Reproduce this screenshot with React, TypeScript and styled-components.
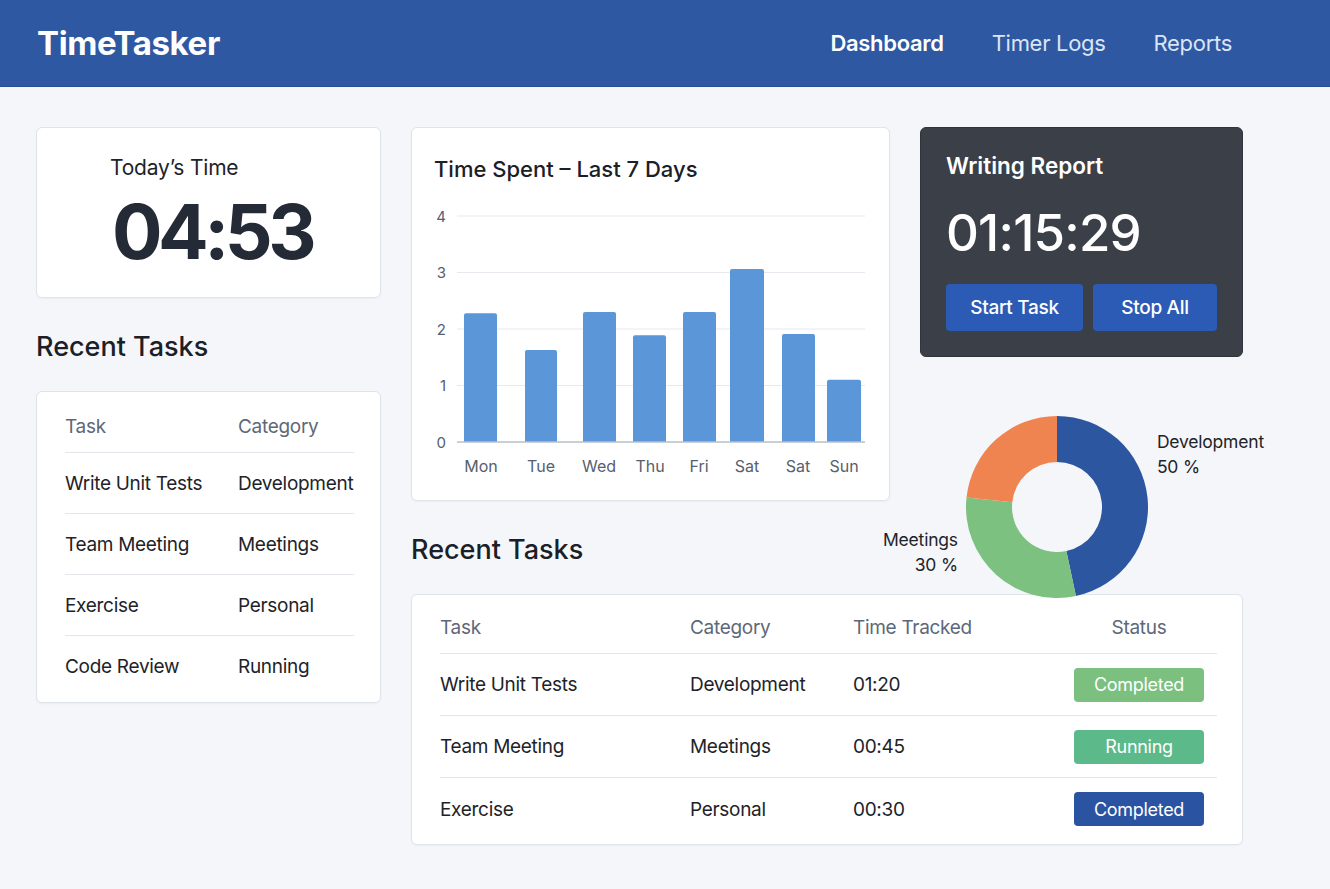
import styled, { createGlobalStyle } from 'styled-components';

const GlobalStyle = createGlobalStyle`
    html, body {
        margin: 0;
        padding: 0;
        background: #f4f6fa;
        font-family: Inter, "Noto Sans", sans-serif;
        color: #1e2329;
    }
    * { box-sizing: border-box; }
`;

const Header = styled.header`
    height: 87px;
    background: #2e58a1;
    border-bottom: 1px solid #284f92;
    display: flex;
    align-items: center;
    justify-content: space-between;
    padding: 0 98px 0 37px;
`;

const Logo = styled.div`
    color: #fff;
    font-size: 33px;
    font-weight: 700;
    letter-spacing: -0.4px;
`;

const Nav = styled.nav`
    display: flex;
    gap: 48px;
`;

const NavLink = styled.a<{ $active?: boolean }>`
    color: ${(p) => (p.$active ? '#ffffff' : '#dbe5f5')};
    font-size: 22px;
    font-weight: ${(p) => (p.$active ? 600 : 400)};
    letter-spacing: -0.3px;
    text-decoration: none;
    cursor: pointer;
`;

const Main = styled.main`
    display: flex;
    gap: 30px;
    padding: 40px 36px;
`;

const Card = styled.div`
    background: #fff;
    border: 1px solid #dfe3ea;
    border-radius: 6px;
    box-shadow: 0 1px 2px rgba(20, 30, 50, 0.04);
`;

const LeftCol = styled.div`
    width: 345px;
    display: flex;
    flex-direction: column;
`;

const TodayCard = styled(Card)`
    height: 171px;
    padding: 27px 0 0 73px;
`;

const TodayLabel = styled.div`
    font-size: 21px;
    line-height: 26px;
    color: #1e2329;
    letter-spacing: -0.2px;
`;

const TodayValue = styled.div`
    margin-top: 13px;
    margin-left: 2px;
    font-size: 75px;
    line-height: 76px;
    font-weight: 700;
    color: #252b36;
    letter-spacing: -4.5px;
`;

const SectionTitle = styled.h2<{ $top?: number; $bottom?: number }>`
    margin: ${(p) => p.$top ?? 0}px 0 ${(p) => p.$bottom ?? 0}px;
    font-size: 27px;
    line-height: 32px;
    font-weight: 500;
    color: #1b2027;
`;

const TableCard = styled(Card)<{ $pad: string }>`
    padding: ${(p) => p.$pad};
`;

const Row = styled.div<{ $cols: string; $h: number; $head?: boolean; $line?: boolean }>`
    display: grid;
    grid-template-columns: ${(p) => p.$cols};
    align-items: center;
    height: ${(p) => p.$h}px;
    border-bottom: ${(p) => (p.$line ? '1px solid #e3e6eb' : 'none')};
    font-size: 19px;
    color: ${(p) => (p.$head ? '#5d6878' : '#1e2329')};
    letter-spacing: -0.3px;
`;

const CenterCell = styled.div`
    display: flex;
    justify-content: center;
`;

const RightArea = styled.div`
    width: 832px;
    display: grid;
    grid-template-columns: 479px 323px;
    grid-template-rows: 230px 144px 93px auto;
    column-gap: 30px;
    grid-template-areas:
        'chart timer'
        'chart donut'
        'heading donut'
        'table table';
`;

const ChartCard = styled(Card)`
    grid-area: chart;
    padding: 28px 0 0 12px;
`;

const ChartTitle = styled.div`
    margin-left: 10px;
    font-size: 22px;
    line-height: 26px;
    font-weight: 500;
    color: #1b2027;
`;

const ChartSvg = styled.svg`
    display: block;
    margin-top: 19px;
`;

const TimerCard = styled.div`
    grid-area: timer;
    background: #3b4048;
    border: 1px solid #30343b;
    border-radius: 6px;
    padding: 25px 0 0 25px;
    color: #fff;
`;

const TimerTitle = styled.div`
    font-size: 22.5px;
    line-height: 26px;
    font-weight: 600;
`;

const TimerValue = styled.div`
    margin-top: 27px;
    font-size: 51px;
    line-height: 54px;
    font-weight: 500;
    letter-spacing: -0.8px;
`;

const ButtonRow = styled.div`
    display: flex;
    gap: 10px;
    margin-top: 24px;
`;

const Button = styled.button<{ $w: number }>`
    width: ${(p) => p.$w}px;
    height: 47px;
    border: none;
    border-radius: 4px;
    background: #2c5bb5;
    color: #fff;
    font-family: inherit;
    font-size: 19px;
    font-weight: 500;
    letter-spacing: -0.3px;
    cursor: pointer;
`;

const DonutWrap = styled.div`
    grid-area: donut;
    display: flex;
    margin-left: -37px;
    padding-top: 59px;
`;

const DonutLabel = styled.div<{ $end?: boolean }>`
    flex-shrink: 0;
    align-self: ${(p) => (p.$end ? 'flex-end' : 'flex-start')};
    text-align: ${(p) => (p.$end ? 'right' : 'left')};
    margin: ${(p) => (p.$end ? '0 8px 17px 0' : '13px 0 0 9px')};
    font-size: 17.5px;
    line-height: 25px;
    color: #1e2329;
    letter-spacing: -0.2px;
    white-space: nowrap;
`;

const HeadingCell = styled.div`
    grid-area: heading;
    align-self: end;
    margin-bottom: 28px;
`;

const MainTable = styled(TableCard)`
    grid-area: table;
`;

const Badge = styled.span<{ $bg: string }>`
    width: 130px;
    height: 34px;
    border-radius: 4px;
    background: ${(p) => p.$bg};
    color: #fff;
    font-size: 18px;
    display: flex;
    align-items: center;
    justify-content: center;
    letter-spacing: -0.3px;
`;

const bars = [
    { day: 'Mon', x: 40, w: 33, v: 2.28, lx: 57 },
    { day: 'Tue', x: 101, w: 32, v: 1.63, lx: 117 },
    { day: 'Wed', x: 159, w: 33, v: 2.3, lx: 175 },
    { day: 'Thu', x: 209, w: 33, v: 1.89, lx: 226 },
    { day: 'Fri', x: 259, w: 33, v: 2.3, lx: 275 },
    { day: 'Sat', x: 306, w: 34, v: 3.06, lx: 323 },
    { day: 'Sat', x: 358, w: 33, v: 1.91, lx: 374 },
    { day: 'Sun', x: 403, w: 34, v: 1.1, lx: 420 },
];

const BarChart = () => {
    const base = 241;
    const unit = 56.5;
    return (
        <ChartSvg width={455} height={282} viewBox='0 0 455 282'>
            {[1, 2, 3, 4].map((n) => (
                <line key={n} x1={33} x2={441} y1={base - n * unit} y2={base - n * unit} stroke='#e6e9ee' strokeWidth={1} />
            ))}
            {[0, 1, 2, 3, 4].map((n) => (
                <text key={n} x={22} y={base - n * unit + 5.5} textAnchor='end' fontSize={15} fill='#56606e' fontFamily='Inter, sans-serif'>
                    {n}
                </text>
            ))}
            {bars.map((b, i) => {
                const h = b.v * unit;
                return (
                    <path
                        key={i}
                        d={`M${b.x} ${base} V${base - h + 2} Q${b.x} ${base - h} ${b.x + 2} ${base - h} H${b.x + b.w - 2} Q${b.x + b.w} ${base - h} ${b.x + b.w} ${base - h + 2} V${base} Z`}
                        fill='#5b97d8'
                    />
                );
            })}
            <line x1={33} x2={441} y1={base} y2={base} stroke='#b9c0ca' strokeWidth={1.5} />
            {bars.map((b, i) => (
                <text key={i} x={b.lx} y={271} textAnchor='middle' fontSize={16} fill='#56606e' fontFamily='Inter, sans-serif'>
                    {b.day}
                </text>
            ))}
        </ChartSvg>
    );
};

// arc segment of a donut, angles in degrees clockwise from top
const arc = (cx: number, cy: number, r1: number, r2: number, a0: number, a1: number) => {
    const pt = (r: number, a: number) => {
        const rad = ((a - 90) * Math.PI) / 180;
        return `${cx + r * Math.cos(rad)} ${cy + r * Math.sin(rad)}`;
    };
    const large = a1 - a0 > 180 ? 1 : 0;
    return `M${pt(r2, a0)} A${r2} ${r2} 0 ${large} 1 ${pt(r2, a1)} L${pt(r1, a1)} A${r1} ${r1} 0 ${large} 0 ${pt(r1, a0)} Z`;
};

const Donut = () => (
    <svg width={182} height={182} viewBox='0 0 182 182' style={{ flexShrink: 0 }}>
        <path d={arc(91, 91, 45, 91, 0, 168)} fill='#2d56a0' />
        <path d={arc(91, 91, 45, 91, 168, 276)} fill='#7cc17f' />
        <path d={arc(91, 91, 45, 91, 276, 360)} fill='#f08451' />
    </svg>
);

const leftRows = [
    ['Write Unit Tests', 'Development'],
    ['Team Meeting', 'Meetings'],
    ['Exercise', 'Personal'],
    ['Code Review', 'Running'],
];

const mainRows = [
    { task: 'Write Unit Tests', cat: 'Development', time: '01:20', status: 'Completed', color: '#7bc07f' },
    { task: 'Team Meeting', cat: 'Meetings', time: '00:45', status: 'Running', color: '#5cb98a' },
    { task: 'Exercise', cat: 'Personal', time: '00:30', status: 'Completed', color: '#2a53a2' },
];

const App = () => {
    const leftCols = '173px 1fr';
    const mainCols = '250px 163px 206px 160px';

    return (
        <>
            <GlobalStyle />
            <Header>
                <Logo>TimeTasker</Logo>
                <Nav>
                    <NavLink $active>Dashboard</NavLink>
                    <NavLink>Timer Logs</NavLink>
                    <NavLink>Reports</NavLink>
                </Nav>
            </Header>
            <Main>
                <LeftCol>
                    <TodayCard>
                        <TodayLabel>Today’s Time</TodayLabel>
                        <TodayValue>04:53</TodayValue>
                    </TodayCard>
                    <SectionTitle $top={33} $bottom={28}>Recent Tasks</SectionTitle>
                    <TableCard $pad='9px 26px 5px 28px'>
                        <Row $cols={leftCols} $h={52} $head $line>
                            <div>Task</div>
                            <div>Category</div>
                        </Row>
                        {leftRows.map(([task, cat], i) => (
                            <Row key={task} $cols={leftCols} $h={61} $line={i < 3}>
                                <div>{task}</div>
                                <div>{cat}</div>
                            </Row>
                        ))}
                    </TableCard>
                </LeftCol>

                <RightArea>
                    <ChartCard>
                        <ChartTitle>Time Spent – Last 7 Days</ChartTitle>
                        <BarChart />
                    </ChartCard>

                    <TimerCard>
                        <TimerTitle>Writing Report</TimerTitle>
                        <TimerValue>01:15:29</TimerValue>
                        <ButtonRow>
                            <Button $w={137}>Start Task</Button>
                            <Button $w={124}>Stop All</Button>
                        </ButtonRow>
                    </TimerCard>

                    <HeadingCell>
                        <SectionTitle>Recent Tasks</SectionTitle>
                    </HeadingCell>

                    <MainTable $pad='7px 25px 4px 28px'>
                        <Row $cols={mainCols} $h={52} $head $line>
                            <div>Task</div>
                            <div>Category</div>
                            <div>Time Tracked</div>
                            <CenterCell>Status</CenterCell>
                        </Row>
                        {mainRows.map((r, i) => (
                            <Row key={r.task} $cols={mainCols} $h={62} $line={i < 2}>
                                <div>{r.task}</div>
                                <div>{r.cat}</div>
                                <div>{r.time}</div>
                                <CenterCell>
                                    <Badge $bg={r.color}>{r.status}</Badge>
                                </CenterCell>
                            </Row>
                        ))}
                    </MainTable>

                    <DonutWrap>
                        <DonutLabel $end>
                            Meetings
                            <br />
                            30 %
                        </DonutLabel>
                        <Donut />
                        <DonutLabel>
                            Development
                            <br />
                            50 %
                        </DonutLabel>
                    </DonutWrap>
                </RightArea>
            </Main>
        </>
    );
};

export default App;
